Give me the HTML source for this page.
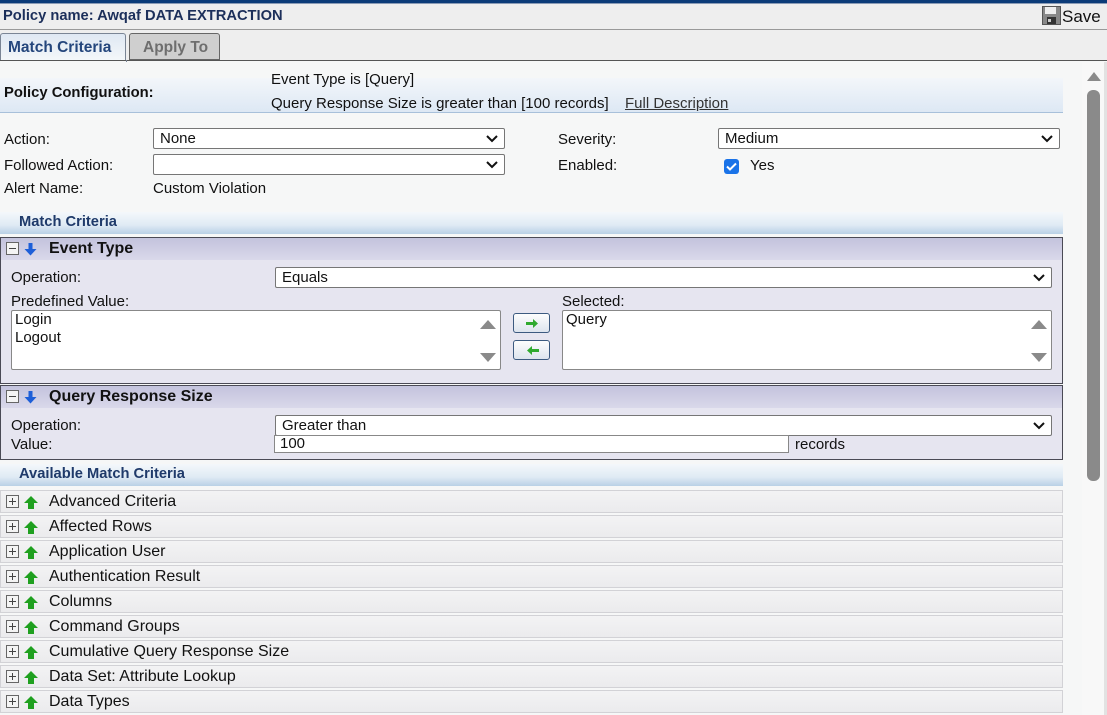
<!DOCTYPE html>
<html><head><meta charset="utf-8"><style>
*{box-sizing:border-box;margin:0;padding:0}
body{width:1107px;height:715px;overflow:hidden;background:#eeeeee;font-family:"Liberation Sans",Arial,sans-serif;font-size:15px;color:#111;position:relative}
.a{position:absolute}
.sel{position:absolute;background:#fff;border:1px solid #767676;border-radius:2px;height:21px;padding-left:6px;line-height:19px;font-size:15px}
.sel svg{position:absolute;right:6px;top:6px}
.hdr{position:absolute;left:0;width:1063px;height:22px;background:linear-gradient(#f4f8fb,#dfeaf4 60%,#b9d0e6);font-weight:bold;color:#1f3a6a;font-size:14.7px;padding-left:19px;line-height:20px}
.sec{position:absolute;left:0;width:1063px;border:1px solid #4a4a55;background:#e6e5f0}
.sech{height:22px;background:linear-gradient(#c3c3dd,#d9d8ea);font-weight:bold;font-size:16px;line-height:22px;padding-left:48px;position:relative}
.item{position:absolute;left:0;width:1063px;height:23px;border:1px solid #d2d2d6;background:linear-gradient(#f3f3f4,#ebebed);line-height:21px;padding-left:48px;font-size:16px}
.pm{position:absolute;left:5px;top:4px;width:13px;height:13px;border:1px solid #666;background:#f4f4f4}
.pm:before{content:"";position:absolute;left:2px;top:5px;width:7px;height:1px;background:#444}
.plus:after{content:"";position:absolute;left:5px;top:2px;width:1px;height:7px;background:#444}
.ar{position:absolute;left:23px;top:5px}
.list{position:absolute;background:#fff;border:1px solid #888;border-radius:2px;font-size:15px;padding:0 3px;line-height:18px}
.btn{position:absolute;left:513px;width:37px;height:20px;border:1px solid #3c5a80;border-radius:3px;background:linear-gradient(#fdfdfd,#dde4ee)}
</style></head><body>
<div class="a" style="left:0;top:0;width:1107px;height:3px;background:#0b3b78"></div>
<div class="a" style="left:0;top:3px;width:1107px;height:1px;background:#8a9bb5"></div>
<div class="a" style="left:3px;top:8px;font-weight:bold;color:#1c2f5a;font-size:14.7px">Policy name: Awqaf DATA EXTRACTION</div>
<svg class="a" style="left:1042px;top:6px" width="19" height="19" viewBox="0 0 19 19"><rect x="0.5" y="0.5" width="18" height="18" fill="#888" stroke="#555"/><rect x="3" y="1" width="11" height="7" fill="#eee"/><rect x="5" y="11" width="9" height="7" fill="#333"/><rect x="6" y="13" width="3" height="3" fill="#ccc"/></svg>
<div class="a" style="left:1062px;top:7px;font-size:17px">Save</div>
<div class="a" style="left:0;top:29px;width:1107px;height:1px;background:#999"></div>
<div class="a" style="left:0;top:33px;width:126px;height:29px;border:1px solid #7a8595;border-bottom:none;border-radius:3px 3px 0 0;background:linear-gradient(#dfe8f3,#f5f8fa);font-weight:bold;color:#24467c;font-size:15.5px;padding:5px 0 0 7px">Match Criteria</div>
<div class="a" style="left:129px;top:33px;width:91px;height:27px;border:1px solid #666;border-radius:3px 3px 0 0;background:#cfcfcf;font-weight:bold;color:#6e6e6e;font-size:15.5px;padding:5px 0 0 13px">Apply To</div>
<div class="a" style="left:0;top:60px;width:1107px;height:655px;background:#f6f7f7;border-top:1px solid #555"></div>
<div class="a" style="left:126px;top:60px;width:1px;height:2px;background:#7a8595"></div>
<div class="a" style="left:0;top:78px;width:1063px;height:35px;background:linear-gradient(#f3f6fa,#dde8f4);border-bottom:1px solid #a8c0da"></div>
<div class="a" style="left:4px;top:85px;font-weight:bold;font-size:14.8px">Policy Configuration:</div>
<div class="a" style="left:271px;top:71px">Event Type is [Query]</div>
<div class="a" style="left:271px;top:95px">Query Response Size is greater than [100 records]</div>
<div class="a" style="left:625px;top:95px;text-decoration:underline;color:#333">Full Description</div>
<div class="a" style="left:4px;top:131px">Action:</div>
<div class="a" style="left:4px;top:157px">Followed Action:</div>
<div class="a" style="left:4px;top:180px">Alert Name:</div>
<div class="a" style="left:153px;top:180px">Custom Violation</div>
<div class="sel" style="left:153px;top:128px;width:352px">None<svg width="12" height="8"><path d="M1 1l5 5 5-5" fill="none" stroke="#111" stroke-width="2"/></svg></div>
<div class="sel" style="left:153px;top:154px;width:352px"><svg width="12" height="8"><path d="M1 1l5 5 5-5" fill="none" stroke="#111" stroke-width="2"/></svg></div>
<div class="a" style="left:558px;top:131px">Severity:</div>
<div class="a" style="left:558px;top:157px">Enabled:</div>
<div class="sel" style="left:718px;top:128px;width:342px">Medium<svg width="12" height="8"><path d="M1 1l5 5 5-5" fill="none" stroke="#111" stroke-width="2"/></svg></div>
<div class="a" style="left:724px;top:159px;width:15px;height:15px;background:#1a73e8;border-radius:3px"><svg width="15" height="15"><path d="M3 7.5l3 3 6-6" fill="none" stroke="#fff" stroke-width="2"/></svg></div>
<div class="a" style="left:750px;top:157px">Yes</div>
<div class="hdr" style="top:212px">Match Criteria</div>
<div class="sec" style="top:237px;height:147px">
 <div class="sech"><div class="pm"></div><svg class="ar" width="13" height="13"><path d="M6.5 0v7" stroke="#1e5fd8" stroke-width="4"/><path d="M0.5 6L6.5 12.5 12.5 6z" fill="#1e5fd8"/></svg>Event Type</div>
</div>
<div class="a" style="left:11px;top:269px">Operation:</div>
<div class="sel" style="left:275px;top:267px;width:777px">Equals<svg width="12" height="8"><path d="M1 1l5 5 5-5" fill="none" stroke="#111" stroke-width="2"/></svg></div>
<div class="a" style="left:11px;top:293px">Predefined Value:</div>
<div class="a" style="left:562px;top:293px">Selected:</div>
<div class="list" style="left:11px;top:310px;width:490px;height:60px">Login<br>Logout
 <svg class="a" style="right:4px;top:6px" width="16" height="48"><path d="M0 12L8 3 16 12z M0 36L8 45 16 36z" fill="#8a8a8a"/></svg></div>
<div class="list" style="left:562px;top:310px;width:490px;height:60px">Query
 <svg class="a" style="right:4px;top:6px" width="16" height="48"><path d="M0 12L8 3 16 12z M0 36L8 45 16 36z" fill="#8a8a8a"/></svg></div>
<div class="btn" style="top:313px"><svg style="position:absolute;left:12px;top:5px" width="13" height="9"><path d="M0 3h7V0l5 4.5-5 4.5V6H0z" fill="#2faa2f"/></svg></div>
<div class="btn" style="top:340px"><svg style="position:absolute;left:12px;top:5px" width="13" height="9"><path d="M13 3H6V0L1 4.5 6 9V6h7z" fill="#2faa2f"/></svg></div>
<div class="sec" style="top:385px;height:75px">
 <div class="sech"><div class="pm"></div><svg class="ar" width="13" height="13"><path d="M6.5 0v7" stroke="#1e5fd8" stroke-width="4"/><path d="M0.5 6L6.5 12.5 12.5 6z" fill="#1e5fd8"/></svg>Query Response Size</div>
</div>
<div class="a" style="left:11px;top:417px">Operation:</div>
<div class="a" style="left:11px;top:436px">Value:</div>
<div class="sel" style="left:275px;top:415px;width:777px">Greater than<svg width="12" height="8"><path d="M1 1l5 5 5-5" fill="none" stroke="#111" stroke-width="2"/></svg></div>
<div class="a" style="left:274px;top:435px;width:515px;height:18px;background:#fff;border:1px solid #888;padding-left:5px;line-height:16px">100</div>
<div class="a" style="left:795px;top:436px">records</div>
<div class="hdr" style="top:464px">Available Match Criteria</div>
<div class="item" style="top:490px"><div class="pm plus"></div><svg class="ar" width="14" height="13"><path d="M7 0L0 7h4v6h6V7h4z" fill="#1fa01f"/></svg>Advanced Criteria</div>
<div class="item" style="top:515px"><div class="pm plus"></div><svg class="ar" width="14" height="13"><path d="M7 0L0 7h4v6h6V7h4z" fill="#1fa01f"/></svg>Affected Rows</div>
<div class="item" style="top:540px"><div class="pm plus"></div><svg class="ar" width="14" height="13"><path d="M7 0L0 7h4v6h6V7h4z" fill="#1fa01f"/></svg>Application User</div>
<div class="item" style="top:565px"><div class="pm plus"></div><svg class="ar" width="14" height="13"><path d="M7 0L0 7h4v6h6V7h4z" fill="#1fa01f"/></svg>Authentication Result</div>
<div class="item" style="top:590px"><div class="pm plus"></div><svg class="ar" width="14" height="13"><path d="M7 0L0 7h4v6h6V7h4z" fill="#1fa01f"/></svg>Columns</div>
<div class="item" style="top:615px"><div class="pm plus"></div><svg class="ar" width="14" height="13"><path d="M7 0L0 7h4v6h6V7h4z" fill="#1fa01f"/></svg>Command Groups</div>
<div class="item" style="top:640px"><div class="pm plus"></div><svg class="ar" width="14" height="13"><path d="M7 0L0 7h4v6h6V7h4z" fill="#1fa01f"/></svg>Cumulative Query Response Size</div>
<div class="item" style="top:665px"><div class="pm plus"></div><svg class="ar" width="14" height="13"><path d="M7 0L0 7h4v6h6V7h4z" fill="#1fa01f"/></svg>Data Set: Attribute Lookup</div>
<div class="item" style="top:690px"><div class="pm plus"></div><svg class="ar" width="14" height="13"><path d="M7 0L0 7h4v6h6V7h4z" fill="#1fa01f"/></svg>Data Types</div>
<div class="a" style="left:1082px;top:62px;width:22px;height:653px;background:#f8f8f8"></div>
<div class="a" style="left:1104px;top:62px;width:3px;height:653px;background:#e2e2e2"></div>
<svg class="a" style="left:1087px;top:71px" width="14" height="10"><path d="M0 10L7 1 14 10z" fill="#8a8a8a"/></svg>
<div class="a" style="left:1087px;top:90px;width:13px;height:391px;background:#8a8a8a;border-radius:6px"></div>
</body></html>
